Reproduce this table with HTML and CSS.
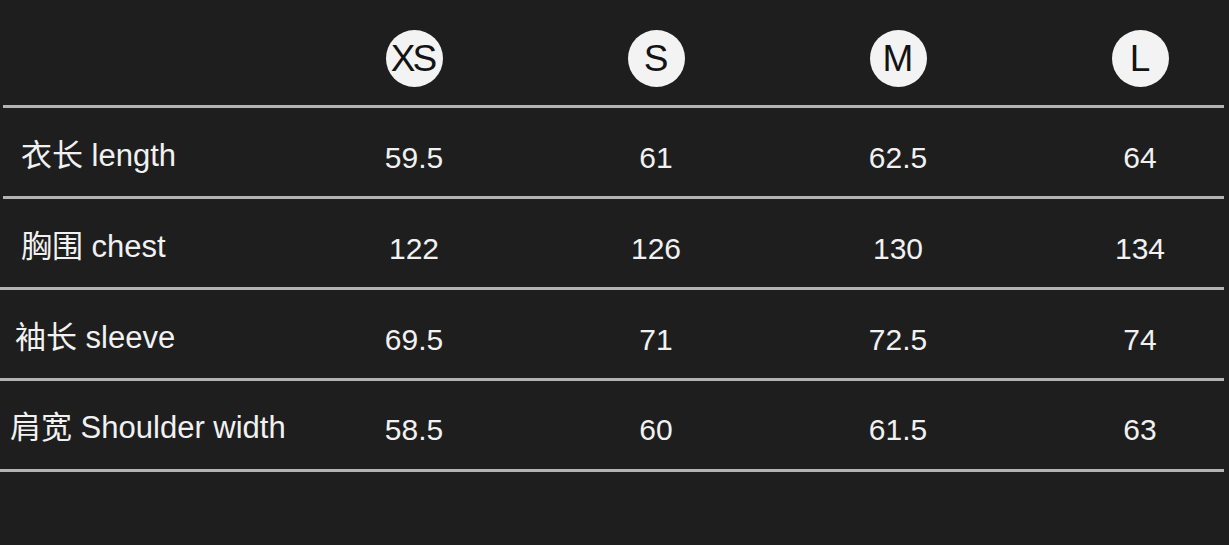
FILE: index.html
```html
<!DOCTYPE html>
<html lang="zh">
<head>
<meta charset="utf-8">
<title>Size chart</title>
<link rel="stylesheet" href="styles.css">
</head>
<body>
<div class="chart">
  <div class="head">
    <div class="corner"></div>
    <div class="size"><span class="badge badge-xs">XS</span></div>
    <div class="size"><span class="badge">S</span></div>
    <div class="size"><span class="badge">M</span></div>
    <div class="size"><span class="badge">L</span></div>
  </div>
  <div class="row">
    <div class="label">衣长 length</div>
    <div class="val">59.5</div>
    <div class="val">61</div>
    <div class="val">62.5</div>
    <div class="val">64</div>
  </div>
  <div class="row">
    <div class="label">胸围 chest</div>
    <div class="val">122</div>
    <div class="val">126</div>
    <div class="val">130</div>
    <div class="val">134</div>
  </div>
  <div class="row row-shift">
    <div class="label label-mid">袖长 sleeve</div>
    <div class="val">69.5</div>
    <div class="val">71</div>
    <div class="val">72.5</div>
    <div class="val">74</div>
  </div>
  <div class="row row-shift row-last">
    <div class="label label-near">肩宽 Shoulder width</div>
    <div class="val">58.5</div>
    <div class="val">60</div>
    <div class="val">61.5</div>
    <div class="val">63</div>
  </div>
</div>
</body>
</html>
```

FILE: styles.css
```css
html, body {
  margin: 0;
  padding: 0;
  background: #1e1e1e;
  overflow: hidden;
}

body {
  width: 1229px;
  height: 545px;
  font-family: "Liberation Sans", Arial, "Noto Sans CJK SC", sans-serif;
  color: #f1f1f1;
}

.chart {
  width: 1221px;
  margin-left: 3px;
}

.head,
.row {
  display: grid;
  grid-template-columns: 290px repeat(4, 242px);
  align-items: center;
}

.head {
  height: 105px;
  padding-top: 12px;
  box-sizing: border-box;
}

.size {
  display: flex;
  justify-content: center;
}

.badge {
  width: 57px;
  height: 57px;
  border-radius: 50%;
  background: #f3f3f3;
  color: #141414;
  display: flex;
  align-items: center;
  justify-content: center;
  font-size: 37px;
  line-height: 1;
}

.badge-xs {
  letter-spacing: -3px;
  text-indent: -3px;
}

.row {
  height: 91px;
  box-sizing: border-box;
  border-top: 3px solid #b3b3b3;
  padding-top: 12px;
  font-size: 30px;
  line-height: 34px;
}

.row-shift {
  margin-left: -3px;
}

.row-last {
  border-bottom: 3px solid #b3b3b3;
  height: 94px;
  padding-bottom: 3px;
}

.label {
  padding-left: 18px;
  white-space: nowrap;
  font-size: 31px;
  position: relative;
  top: -2px;
}

.label-mid {
  padding-left: 15px;
}

.label-near {
  padding-left: 10px;
}

.row-shift .val {
  position: relative;
  left: 3px;
}

.val {
  text-align: center;
}
```
